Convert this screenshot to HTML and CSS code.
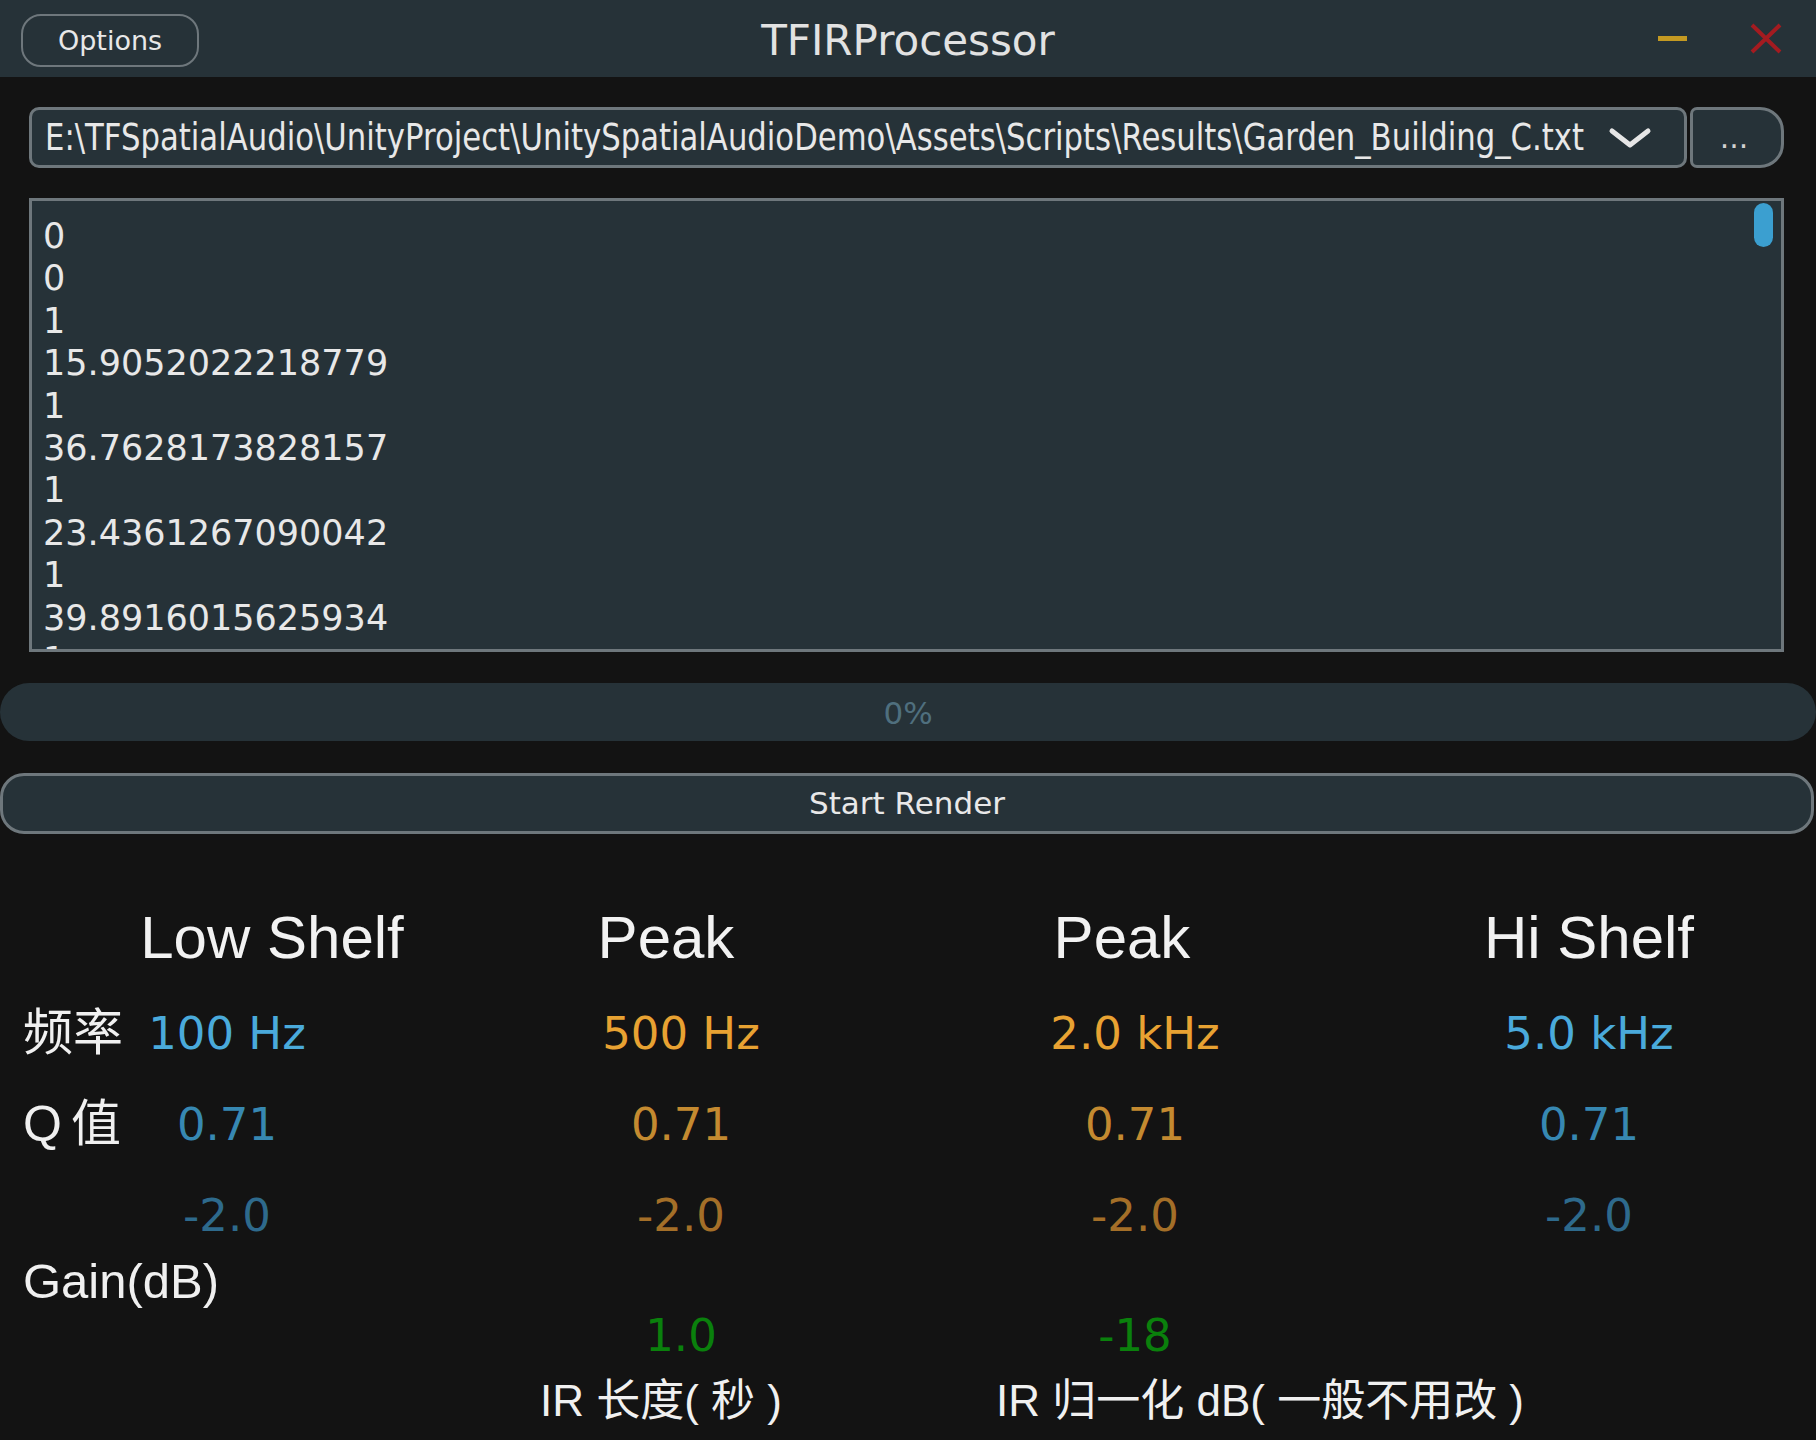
FILE: index.html
```html
<!DOCTYPE html>
<html lang="zh-CN">
<head>
<meta charset="utf-8">
<title>TFIRProcessor</title>
<link rel="stylesheet" href="styles.css">
</head>
<body>
<div class="window">
  <header class="titlebar">
    <button class="options-btn">Options</button>
    <div class="title">TFIRProcessor</div>
    <div class="win-controls">
      <span class="minimize"></span>
      <svg class="close" width="32" height="31" viewBox="0 0 32 31">
        <path d="M2 2 L30 29 M30 2 L2 29" stroke="#a41b20" stroke-width="4" stroke-linecap="butt" fill="none"/>
      </svg>
    </div>
  </header>

  <section class="file-row">
    <div class="combo">
      <div class="path-wrap"><span class="path">E:\TFSpatialAudio\UnityProject\UnitySpatialAudioDemo\Assets\Scripts\Results\Garden_Building_C.txt</span></div>
      <svg class="chevron" width="44" height="22" viewBox="0 0 44 22">
        <path d="M4 4 L22 18 L40 4" stroke="#e6e6e6" stroke-width="5" fill="none" stroke-linecap="round" stroke-linejoin="round"/>
      </svg>
    </div>
    <button class="browse">...</button>
  </section>

  <section class="log">
    <div class="log-text">0
0
1
15.9052022218779
1
36.7628173828157
1
23.4361267090042
1
39.8916015625934
1</div>
    <div class="scroll-thumb"></div>
  </section>

  <div class="progress"><span class="progress-label">0%</span></div>

  <button class="render">Start Render</button>

  <section class="eq">
    <div class="hdr hdr-low">Low Shelf</div>
    <div class="hdr hdr-peak1">Peak</div>
    <div class="hdr hdr-peak2">Peak</div>
    <div class="hdr">Hi Shelf</div>

    <div class="cell dual row-val">
      <span class="label">频率</span>
      <span class="val freq-blue">100 Hz</span>
    </div>
    <div class="cell row-val"><span class="val freq-orange">500 Hz</span></div>
    <div class="cell row-val"><span class="val freq-orange">2.0 kHz</span></div>
    <div class="cell row-val"><span class="val freq-blue">5.0 kHz</span></div>

    <div class="cell dual row-val">
      <span class="label q-label">Q值</span>
      <span class="val q-blue">0.71</span>
    </div>
    <div class="cell row-val"><span class="val q-orange">0.71</span></div>
    <div class="cell row-val"><span class="val q-orange">0.71</span></div>
    <div class="cell row-val"><span class="val q-blue">0.71</span></div>

    <div class="cell row-val"><span class="val g-blue">-2.0</span></div>
    <div class="cell row-val"><span class="val g-orange">-2.0</span></div>
    <div class="cell row-val"><span class="val g-orange">-2.0</span></div>
    <div class="cell row-val"><span class="val g-blue">-2.0</span></div>

    <div class="cell gain-label"><span class="label">Gain(dB)</span></div>

    <div class="cell row-ir col-2"><span class="val green">1.0</span></div>
    <div class="cell row-ir col-3"><span class="val green">-18</span></div>

    <div class="cell ir-label ir-len">IR 长度( 秒 )</div>
    <div class="cell ir-label ir-norm">IR 归一化 dB( 一般不用改 )</div>
  </section>
</div>
</body>
</html>
```

FILE: styles.css
```css
* {
  box-sizing: border-box;
  margin: 0;
  padding: 0;
}

html, body {
  width: 1816px;
  height: 1440px;
  background: #131313;
  overflow: hidden;
}

body {
  font-family: "DejaVu Sans", "Noto Sans CJK SC", sans-serif;
  color: #e6e6e6;
}

.window {
  width: 1816px;
  height: 1440px;
  display: flex;
  flex-direction: column;
}

/* ---------- title bar ---------- */
.titlebar {
  height: 77px;
  flex: 0 0 77px;
  background: #263238;
  display: grid;
  grid-template-columns: 1fr auto 1fr;
  align-items: center;
}

.options-btn {
  justify-self: start;
  margin-left: 21px;
  margin-top: 4px;
  width: 178px;
  height: 53px;
  border: 2.5px solid #6e777c;
  border-radius: 20px;
  background: #263238;
  color: #e8e8e8;
  font-family: "DejaVu Sans", sans-serif;
  font-size: 27px;
}

.title {
  align-self: stretch;
  font-size: 42px;
  line-height: 73px;
  padding-top: 4px;
  color: #e2e2e2;
}

.win-controls {
  justify-self: end;
  margin-right: 34px;
  display: flex;
  align-items: center;
  gap: 63px;
}

.minimize {
  display: block;
  width: 29px;
  height: 5px;
  background: #c49a22;
}

.close {
  display: block;
}

/* ---------- file row ---------- */
.file-row {
  margin: 30px 0 0 29px;
  width: 1755px;
  height: 61px;
  flex: 0 0 61px;
  display: flex;
}

.combo {
  flex: 0 0 1658px;
  min-width: 0;
  overflow: hidden;
  height: 61px;
  border: 3px solid #6e777c;
  border-radius: 10px;
  background: #263238;
  display: flex;
  align-items: center;
  padding-left: 13px;
}

.path-wrap {
  flex: 1 1 0;
  min-width: 0;
  overflow: hidden;
  white-space: nowrap;
}

.path {
  display: inline-block;
  font-size: 37px;
  line-height: 55px;
  color: #e8e8e8;
  transform: scaleX(0.83);
  transform-origin: left center;
}

.chevron {
  flex: 0 0 44px;
  margin: 0 32px 0 8px;
}

.browse {
  flex: 0 0 94px;
  margin-left: 3px;
  height: 61px;
  border: 3px solid #6e777c;
  border-radius: 7px 24px 24px 7px;
  background: #263238;
  color: #d0d0d0;
  font-family: "DejaVu Sans", sans-serif;
  font-size: 30px;
  padding-right: 6px;
}

/* ---------- log ---------- */
.log {
  position: relative;
  margin: 30px 0 0 29px;
  width: 1755px;
  height: 454px;
  flex: 0 0 454px;
  border: 3px solid #6e777c;
  background: #263238;
  overflow: hidden;
  padding: 14px 0 0 11px;
}

.log-text {
  white-space: pre-line;
  font-size: 35px;
  line-height: 42.4px;
  color: #e8e8e8;
}

.scroll-thumb {
  position: absolute;
  top: 2px;
  right: 8px;
  width: 19px;
  height: 44px;
  border-radius: 10px;
  background: #3b9fd0;
}

/* ---------- progress ---------- */
.progress {
  margin-top: 31px;
  height: 58px;
  flex: 0 0 58px;
  border-radius: 29px;
  background: #263238;
  text-align: center;
  padding-top: 4px;
}

.progress-label {
  font-size: 31px;
  line-height: 52px;
  color: #4f6f7e;
}

/* ---------- render ---------- */
.render {
  margin-top: 32px;
  width: 1814px;
  height: 61px;
  flex: 0 0 61px;
  border: 3px solid #6e777c;
  border-radius: 24px;
  background: #263238;
  color: #e8e8e8;
  font-family: "DejaVu Sans", sans-serif;
  font-size: 31px;
  padding-bottom: 2px;
}

/* ---------- EQ grid ---------- */
.eq {
  padding-top: 54px;
  display: grid;
  grid-template-columns: repeat(4, 454px);
  grid-template-rows: 100px 91px 91px 91px 40px 69px 62px;
}

.hdr {
  font-family: "Liberation Sans", sans-serif;
  font-size: 60px;
  line-height: 100px;
  color: #f2f2f2;
  text-align: center;
  white-space: nowrap;
}

.hdr-low { padding-left: 90px; }
.hdr-peak1 { padding-right: 30px; }
.hdr-peak2 { padding-right: 26px; }

.cell {
  text-align: center;
  white-space: nowrap;
}

.row-val {
  line-height: 91px;
}

.dual {
  display: grid;
}

.dual > * {
  grid-area: 1 / 1;
}

.dual > .label {
  justify-self: start;
}

.dual > .val {
  justify-self: center;
}

.label {
  font-family: "Liberation Sans", "Noto Sans CJK SC", sans-serif;
  font-size: 50px;
  color: #f0f0f0;
  padding-left: 23px;
}

.q-label {
  letter-spacing: 9px;
}

.val {
  font-family: "DejaVu Sans", sans-serif;
  font-size: 45px;
}

.freq-blue { color: #4aaadb; }
.freq-orange { color: #e8a232; }
.q-blue { color: #3788b2; }
.q-orange { color: #c48a30; }
.g-blue { color: #2e6a8c; }
.g-orange { color: #a46f28; }
.green { color: #0a800c; }

.gain-label {
  grid-column: 1 / 2;
  grid-row: 5;
  text-align: left;
  line-height: 40px;
}

.gain-label .label {
  font-size: 49px;
}

.row-ir {
  grid-row: 6;
  line-height: 69px;
}

.col-2 { grid-column: 2; }
.col-3 { grid-column: 3; }

.ir-label {
  grid-row: 7;
  font-family: "Liberation Sans", "Noto Sans CJK SC", sans-serif;
  font-size: 44px;
  line-height: 62px;
  color: #f0f0f0;
  text-align: left;
}

.ir-len {
  grid-column: 2;
  padding-left: 86px;
}

.ir-norm {
  grid-column: 3 / 5;
  padding-left: 88px;
}
```
